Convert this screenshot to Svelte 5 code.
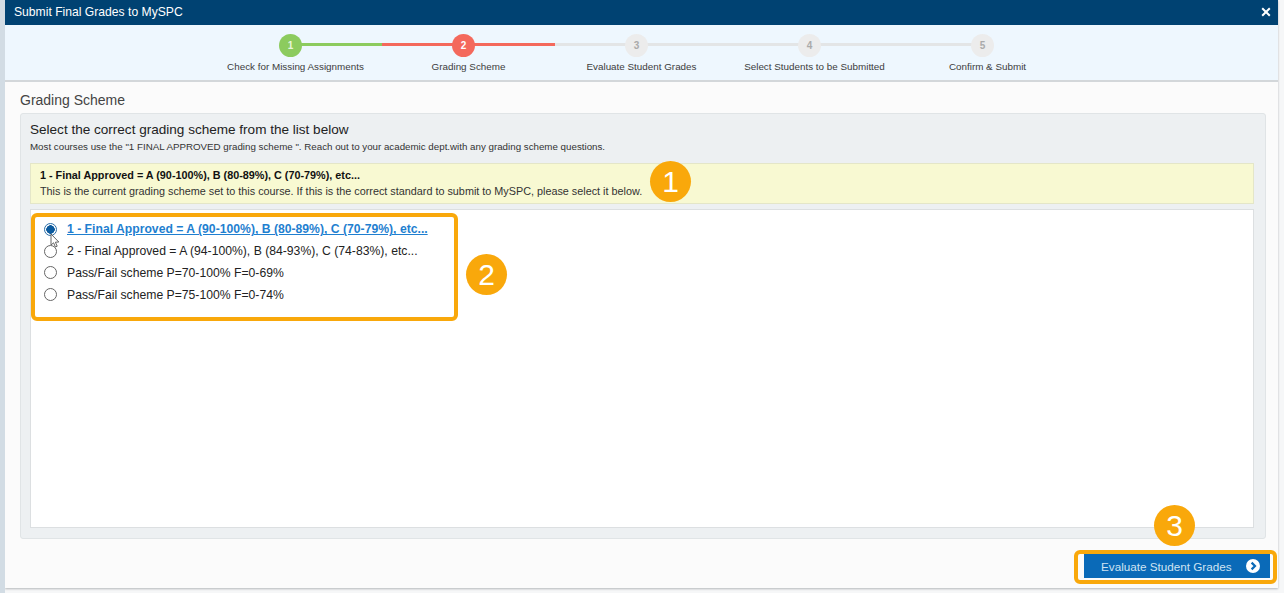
<script lang="ts">
	type Step = { n: number; label: string; state: 'done' | 'active' | 'todo' };

	const steps: Step[] = [
		{ n: 1, label: 'Check for Missing Assignments', state: 'done' },
		{ n: 2, label: 'Grading Scheme', state: 'active' },
		{ n: 3, label: 'Evaluate Student Grades', state: 'todo' },
		{ n: 4, label: 'Select Students to be Submitted', state: 'todo' },
		{ n: 5, label: 'Confirm & Submit', state: 'todo' }
	];

	const schemes = [
		'1 - Final Approved = A (90-100%), B (80-89%), C (70-79%), etc...',
		'2 - Final Approved = A (94-100%), B (84-93%), C (74-83%), etc...',
		'Pass/Fail scheme P=70-100% F=0-69%',
		'Pass/Fail scheme P=75-100% F=0-74%'
	];

	let selected = $state(0);
</script>

<div class="page">
	<div class="dialog">
		<header class="titlebar">
			<span>Submit Final Grades to MySPC</span>
			<button class="close" aria-label="Close">
				<svg viewBox="0 0 10 10" width="10" height="10">
					<path d="M1.2 1.2 L8.8 8.8 M8.8 1.2 L1.2 8.8" stroke="#fff" stroke-width="2" fill="none" />
				</svg>
			</button>
		</header>

		<nav class="steps">
			{#each steps as step, i (step.n)}
				<div class="step {step.state}">
					{#if i > 0}<i class="line left"></i>{/if}
					{#if i < steps.length - 1}<i class="line right"></i>{/if}
					<span class="dot">{step.n}</span>
					<span class="label">{step.label}</span>
				</div>
			{/each}
		</nav>

		<main class="body">
			<h2>Grading Scheme</h2>
			<section class="panel">
				<h3>Select the correct grading scheme from the list below</h3>
				<p class="hint">Most courses use the "1 FINAL APPROVED grading scheme ". Reach out to your academic dept.with any grading scheme questions.</p>

				<div class="current">
					<strong>1 - Final Approved = A (90-100%), B (80-89%), C (70-79%), etc...</strong>
					<span>This is the current grading scheme set to this course. If this is the correct standard to submit to MySPC, please select it below.</span>
				</div>

				<div class="list">
					{#each schemes as scheme, i}
						<label class="option" class:checked={selected === i}>
							<input type="radio" name="scheme" checked={selected === i} onchange={() => (selected = i)} />
							<span>{scheme}</span>
						</label>
					{/each}
				</div>
			</section>

			<footer class="actions">
				<button class="primary">
					Evaluate Student Grades
					<svg viewBox="0 0 14 14" width="14" height="14">
						<circle cx="7" cy="7" r="7" fill="#fff" />
						<path d="M5.6 3.6 L9 7 L5.6 10.4" stroke="#0a6ab8" stroke-width="2.2" fill="none" />
					</svg>
				</button>
			</footer>
		</main>

		<!-- tutorial callouts drawn over the dialog -->
		<span class="badge b1">1</span>
		<span class="badge b2">2</span>
		<span class="badge b3">3</span>
		<span class="frame f2"></span>
		<span class="frame f3"></span>
		<svg class="cursor" viewBox="0 0 10 16" width="10" height="16">
			<path d="M1 1 L1 12 L3.6 9.8 L5.4 14 L7.2 13.2 L5.4 9.2 L8.8 9 Z" fill="#fff" stroke="#555" stroke-width="0.9" />
		</svg>
	</div>
</div>

<style>
	:global(body) {
		margin: 0;
		background: #f6f7f8;
	}

	.page {
		height: 593px;
		overflow: hidden;
		padding: 0 6px 5px 0;
		box-sizing: border-box;
		border-left: 5px solid #d2dce4;
		font-family: 'Liberation Sans', Arial, sans-serif;
	}

	.dialog {
		position: relative;
		height: 100%;
		display: flex;
		flex-direction: column;
		background: #fbfbfb;
		box-shadow: 0 1px 2px #b5b8ba;
	}

	.titlebar {
		flex: none;
		height: 25px;
		display: flex;
		align-items: center;
		justify-content: space-between;
		padding: 0 7px 1px 9px;
		box-sizing: border-box;
		background: #004272;
		color: #fff;
		font-size: 12.15px;
	}

	.close {
		display: flex;
		padding: 0;
		border: 0;
		background: none;
	}

	.steps {
		flex: none;
		height: 57px;
		display: grid;
		grid-template-columns: repeat(5, 173px);
		padding-left: 204px;
		box-sizing: border-box;
		background: #eef7fe;
		border-bottom: 2px solid #d3d7da;
	}

	.step {
		position: relative;
		display: flex;
		flex-direction: column;
		align-items: center;
		padding-top: 9px;
	}

	.line {
		position: absolute;
		top: 18px;
		width: 50%;
		height: 3px;
		background: #e3e5e6;
	}

	.line.left {
		left: 0;
	}

	.line.right {
		right: 0;
	}

	.step.done .line.right {
		background: #8ccb5e;
	}

	.step.active .line {
		background: #f4695c;
	}

	.dot {
		position: relative;
		width: 23px;
		height: 23px;
		margin-right: 10px;
		border-radius: 50%;
		display: flex;
		align-items: center;
		justify-content: center;
		font-size: 10px;
		font-weight: 700;
		background: #ececec;
		color: #aaa;
	}

	.done .dot {
		background: #8ccb5e;
		color: #e8f5dc;
	}

	.active .dot {
		background: #f4695c;
		color: #fff;
	}

	.label {
		margin-top: 4px;
		font-size: 9.85px;
		line-height: 12px;
		color: #3c3c3c;
		white-space: nowrap;
	}

	.body {
		flex: 1;
		min-height: 0;
		display: flex;
		flex-direction: column;
		padding: 11px 12px 0 15px;
	}

	h2 {
		margin: 0 0 5px;
		font-size: 14px;
		line-height: 15px;
		font-weight: 400;
		color: #444;
	}

	.panel {
		height: 426px;
		box-sizing: border-box;
		display: flex;
		flex-direction: column;
		padding: 8px 11px 10px 9px;
		background: #edf0f2;
		border: 1px solid #e0e4e6;
		border-radius: 3px;
	}

	h3 {
		margin: 0;
		font-size: 13.55px;
		line-height: 15px;
		font-weight: 400;
		color: #222;
	}

	.hint {
		margin: 4px 0 0;
		font-size: 9.75px;
		line-height: 12px;
		color: #333;
	}

	.current {
		margin-top: 10px;
		height: 41px;
		box-sizing: border-box;
		display: flex;
		flex-direction: column;
		justify-content: center;
		gap: 3px;
		padding-left: 9px;
		background: #f8f9d2;
		border: 1px solid #e4e6c8;
		font-size: 10.82px;
		line-height: 13px;
		color: #333;
	}

	.current strong {
		color: #111;
	}

	.list {
		flex: 1;
		margin-top: 5px;
		padding-top: 8.6px;
		background: #fff;
		border: 1px solid #dcdfe1;
	}

	.option {
		display: flex;
		align-items: center;
		height: 21.7px;
		padding-left: 14px;
		font-size: 12.2px;
		color: #222;
	}

	.option input {
		appearance: none;
		flex: none;
		width: 13px;
		height: 13px;
		margin: 0 10px 0 -1px;
		background: #fff;
		border: 1px solid #666;
		border-radius: 50%;
	}

	.option.checked input {
		border-color: #2b6ea8;
		background: radial-gradient(circle, #0b5a9e 0 4px, #fff 4.5px);
	}

	.option.checked span {
		font-weight: 700;
		color: #1f7fd0;
		text-decoration: underline;
	}

	.actions {
		flex: 1;
		display: flex;
		justify-content: flex-end;
		align-items: flex-start;
		margin-right: -4px;
		padding-top: 15px;
	}

	.primary {
		display: flex;
		align-items: center;
		justify-content: space-between;
		width: 186px;
		height: 24px;
		padding: 0 10px 0 17px;
		border: 0;
		background: #0a6ab8;
		color: #cfe3f2;
		font-family: inherit;
		font-size: 11.7px;
	}

	.badge {
		position: absolute;
		width: 41px;
		height: 41px;
		border-radius: 50%;
		display: flex;
		align-items: center;
		justify-content: center;
		background: #f9a80b;
		color: #fff;
		font-size: 30px;
	}

	.b1 {
		left: 645px;
		top: 161px;
	}

	.b2 {
		left: 461px;
		top: 254px;
	}

	.b3 {
		left: 1149px;
		top: 505px;
	}

	.frame {
		position: absolute;
		box-sizing: border-box;
		border: 4px solid #f9a80b;
		border-radius: 6px;
	}

	.f2 {
		left: 26px;
		top: 213px;
		width: 427px;
		height: 108px;
	}

	.f3 {
		left: 1069px;
		top: 550px;
		width: 203px;
		height: 34px;
	}

	.cursor {
		position: absolute;
		left: 45px;
		top: 233px;
	}
</style>
